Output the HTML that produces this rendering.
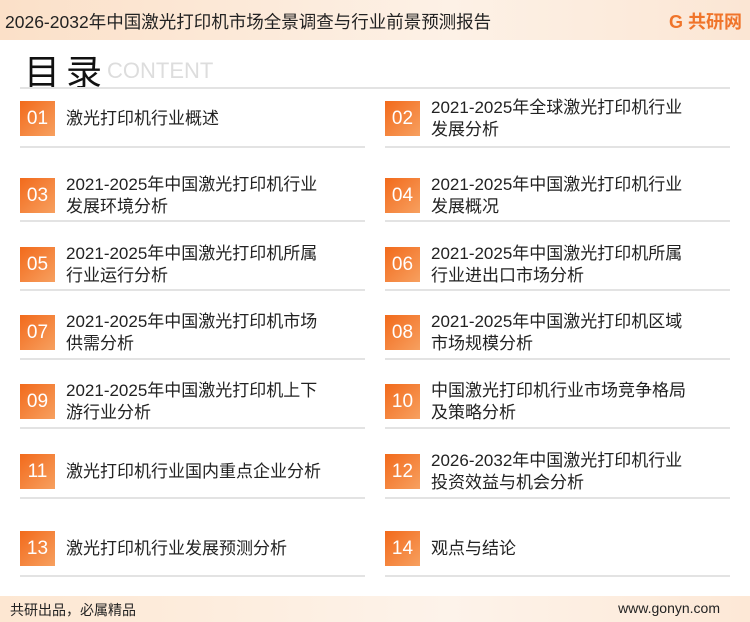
<!DOCTYPE html><html><head><meta charset="utf-8"><style>
body{margin:0;width:750px;height:622px;position:relative;background:#fff;font-family:"Liberation Sans","Noto Sans CJK SC",sans-serif;overflow:hidden}
.hd{position:absolute;left:0;top:0;width:750px;height:40px;background:linear-gradient(90deg,#fbe0c8,#fdf1e6 60%,#fbe6d4)}
.hd .t{position:absolute;left:5px;top:9px;font-size:17.5px;color:#222}
.logo{position:absolute;right:8px;top:8px;font-size:18px;font-weight:bold;color:#f0742a}
.ml{position:absolute;left:24px;top:44px;font-size:36px;color:#111;letter-spacing:6px}
.ct{position:absolute;left:107px;top:58px;font-size:22px;color:#ddd}
.hl{position:absolute;left:20px;top:87px;width:710px;height:2px;background:#e3e3e3}
.it{position:absolute;width:345px}
.b{position:absolute;left:0;width:35px;height:35px;background:linear-gradient(135deg,#f26a1b,#f7a060);color:#fff;font-size:19px;text-align:center;line-height:35px}
.x{position:absolute;left:46px;font-size:17px;color:#222;line-height:22px;width:265px}
.ln{position:absolute;left:0;width:345px;height:2px;background:#e3e3e3}
.ft{position:absolute;left:0;top:596px;width:750px;height:26px;background:linear-gradient(90deg,#fde7d2,#fdf3ea 60%,#fde8d6);font-size:14px;color:#222}
</style></head><body>
<div class="hd"><div class="t">2026-2032年中国激光打印机市场全景调查与行业前景预测报告</div><div class="logo">G 共研网</div></div>
<div class="ml">目录</div><div class="ct">CONTENT</div>
<div class="hl"></div>

<div class="it" style="left:20px;top:101px"><div class="b">01</div><div class="x" style="top:7px">激光打印机行业概述</div></div>
<div class="it" style="left:385px;top:101px"><div class="b">02</div><div class="x" style="top:-4px">2021-2025年全球激光打印机行业发展分析</div></div>
<div class="ln" style="left:20px;top:146px"></div><div class="ln" style="left:385px;top:146px"></div>

<div class="it" style="left:20px;top:178px"><div class="b">03</div><div class="x" style="top:-4px">2021-2025年中国激光打印机行业发展环境分析</div></div>
<div class="it" style="left:385px;top:178px"><div class="b">04</div><div class="x" style="top:-4px">2021-2025年中国激光打印机行业发展概况</div></div>
<div class="ln" style="left:20px;top:220px"></div><div class="ln" style="left:385px;top:220px"></div>

<div class="it" style="left:20px;top:247px"><div class="b">05</div><div class="x" style="top:-4px">2021-2025年中国激光打印机所属行业运行分析</div></div>
<div class="it" style="left:385px;top:247px"><div class="b">06</div><div class="x" style="top:-4px">2021-2025年中国激光打印机所属行业进出口市场分析</div></div>
<div class="ln" style="left:20px;top:289px"></div><div class="ln" style="left:385px;top:289px"></div>

<div class="it" style="left:20px;top:315px"><div class="b">07</div><div class="x" style="top:-4px">2021-2025年中国激光打印机市场供需分析</div></div>
<div class="it" style="left:385px;top:315px"><div class="b">08</div><div class="x" style="top:-4px">2021-2025年中国激光打印机区域市场规模分析</div></div>
<div class="ln" style="left:20px;top:358px"></div><div class="ln" style="left:385px;top:358px"></div>

<div class="it" style="left:20px;top:384px"><div class="b">09</div><div class="x" style="top:-4px">2021-2025年中国激光打印机上下游行业分析</div></div>
<div class="it" style="left:385px;top:384px"><div class="b">10</div><div class="x" style="top:-4px">中国激光打印机行业市场竞争格局及策略分析</div></div>
<div class="ln" style="left:20px;top:427px"></div><div class="ln" style="left:385px;top:427px"></div>

<div class="it" style="left:20px;top:454px"><div class="b">11</div><div class="x" style="top:7px;width:300px">激光打印机行业国内重点企业分析</div></div>
<div class="it" style="left:385px;top:454px"><div class="b">12</div><div class="x" style="top:-4px">2026-2032年中国激光打印机行业投资效益与机会分析</div></div>
<div class="ln" style="left:20px;top:497px"></div><div class="ln" style="left:385px;top:497px"></div>

<div class="it" style="left:20px;top:531px"><div class="b">13</div><div class="x" style="top:7px;width:300px">激光打印机行业发展预测分析</div></div>
<div class="it" style="left:385px;top:531px"><div class="b">14</div><div class="x" style="top:7px">观点与结论</div></div>
<div class="ln" style="left:20px;top:575px"></div><div class="ln" style="left:385px;top:575px"></div>

<div class="ft"><span style="position:absolute;left:10px;top:4px">共研出品，必属精品</span><span style="position:absolute;right:30px;top:4px">www.gonyn.com</span></div>
</body></html>
